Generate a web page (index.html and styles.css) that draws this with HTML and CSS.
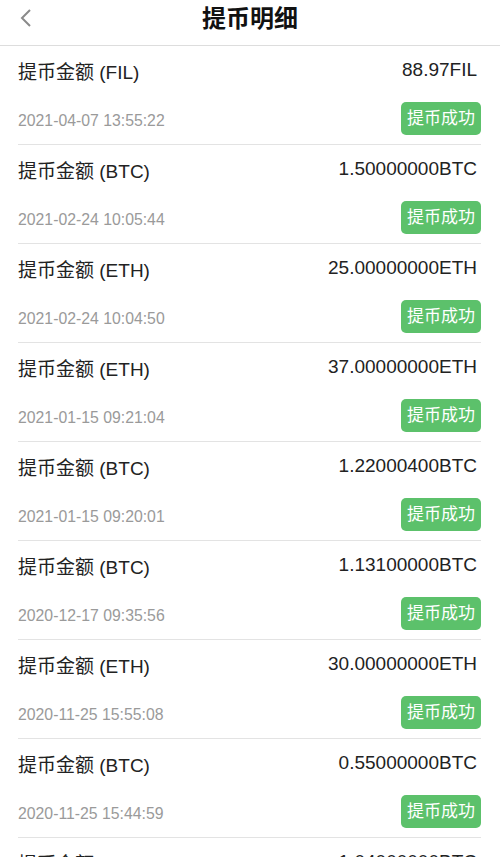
FILE: index.html
```html
<!DOCTYPE html>
<html lang="zh-CN">
<head>
  <meta charset="UTF-8">
  <meta name="viewport" content="width=device-width, initial-scale=1.0">
  <title>提币明细</title>
  <link rel="stylesheet" href="styles.css">
</head>
<body>
  <div class="header">
    <a class="back" href="#">
      <svg width="14" height="20" viewBox="0 0 14 20"><path d="M11 2 L3 10 L11 18" fill="none" stroke="#8a8a8a" stroke-width="2"/></svg>
    </a>
    <h1>提币明细</h1>
  </div>

  <ul class="list">
    <li class="item">
      <div class="line">
        <span>提币金额 (FIL)</span>
        <span>88.97FIL</span>
      </div>
      <div class="line sub">
        <span class="date">2021-04-07 13:55:22</span>
        <span class="badge">提币成功</span>
      </div>
    </li>
    <li class="item">
      <div class="line">
        <span>提币金额 (BTC)</span>
        <span>1.50000000BTC</span>
      </div>
      <div class="line sub">
        <span class="date">2021-02-24 10:05:44</span>
        <span class="badge">提币成功</span>
      </div>
    </li>
    <li class="item">
      <div class="line">
        <span>提币金额 (ETH)</span>
        <span>25.00000000ETH</span>
      </div>
      <div class="line sub">
        <span class="date">2021-02-24 10:04:50</span>
        <span class="badge">提币成功</span>
      </div>
    </li>
    <li class="item">
      <div class="line">
        <span>提币金额 (ETH)</span>
        <span>37.00000000ETH</span>
      </div>
      <div class="line sub">
        <span class="date">2021-01-15 09:21:04</span>
        <span class="badge">提币成功</span>
      </div>
    </li>
    <li class="item">
      <div class="line">
        <span>提币金额 (BTC)</span>
        <span>1.22000400BTC</span>
      </div>
      <div class="line sub">
        <span class="date">2021-01-15 09:20:01</span>
        <span class="badge">提币成功</span>
      </div>
    </li>
    <li class="item">
      <div class="line">
        <span>提币金额 (BTC)</span>
        <span>1.13100000BTC</span>
      </div>
      <div class="line sub">
        <span class="date">2020-12-17 09:35:56</span>
        <span class="badge">提币成功</span>
      </div>
    </li>
    <li class="item">
      <div class="line">
        <span>提币金额 (ETH)</span>
        <span>30.00000000ETH</span>
      </div>
      <div class="line sub">
        <span class="date">2020-11-25 15:55:08</span>
        <span class="badge">提币成功</span>
      </div>
    </li>
    <li class="item">
      <div class="line">
        <span>提币金额 (BTC)</span>
        <span>0.55000000BTC</span>
      </div>
      <div class="line sub">
        <span class="date">2020-11-25 15:44:59</span>
        <span class="badge">提币成功</span>
      </div>
    </li>
    <li class="item">
      <div class="line">
        <span>提币金额 (BTC)</span>
        <span>1.04000000BTC</span>
      </div>
      <div class="line sub">
        <span class="date">2020-11-25 15:40:12</span>
        <span class="badge">提币成功</span>
      </div>
    </li>
  </ul>
</body>
</html>
```

FILE: styles.css
```css
html, body {
  margin: 0;
  padding: 0;
  height: 100%;
  overflow: hidden;
}
body {
  font-family: "Liberation Sans", "Noto Sans CJK SC", sans-serif;
  background-color: #fff;
  color: #222;
}
.header {
  position: relative;
  height: 45px;
  border-bottom: 1px solid #ddd;
  display: flex;
  align-items: center;
  justify-content: center;
}
.header h1 {
  margin: 0;
  font-size: 24px;
  font-weight: bold;
  color: #111;
  line-height: 36px;
  padding-bottom: 8px;
}
.back {
  position: absolute;
  left: 19px;
  top: 8px;
  display: flex;
}
.list {
  list-style: none;
  margin: 0 19px 0 18px;
  padding: 0;
}
.item {
  padding: 11px 0 9px;
  border-bottom: 1px solid #e3e3e3;
}
.line {
  display: flex;
  justify-content: space-between;
  align-items: center;
  height: 26px;
  font-size: 19px;
  padding-right: 4px;
}
.line.sub {
  height: 33px;
  margin-top: 19px;
  padding-right: 0;
}
.date {
  font-size: 15.8px;
  color: #9a9a9a;
  padding-top: 5px;
}
.badge {
  background-color: #5cc16b;
  color: #fff;
  font-size: 17px;
  height: 33px;
  line-height: 33px;
  padding: 0 6px;
  border-radius: 5px;
}
```
